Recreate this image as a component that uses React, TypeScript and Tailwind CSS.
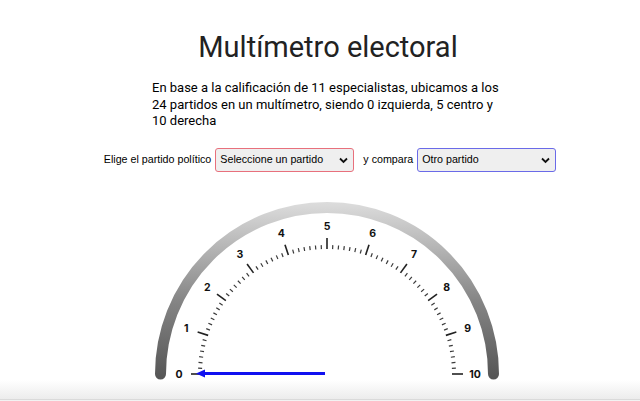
import React from "react";

const CX = 327;
const CY = 373;

function polar(r: number, deg: number) {
  const a = (deg * Math.PI) / 180;
  return { x: CX - r * Math.cos(a), y: CY - r * Math.sin(a) };
}

function Gauge() {
  const majors = Array.from({ length: 11 }, (_, i) => i);
  const minors: number[] = [];
  const sub = 7;
  for (let i = 0; i < 10; i++) {
    for (let j = 1; j < sub; j++) minors.push(i + j / sub);
  }
  return (
    <svg width={640} height={215} viewBox="0 186 640 215" className="block">
      <defs>
        <linearGradient id="arcg" gradientUnits="userSpaceOnUse" x1="0" y1="202" x2="0" y2="380">
          <stop offset="0" stopColor="#dcdcdc" />
          <stop offset="0.25" stopColor="#b5b5b5" />
          <stop offset="0.55" stopColor="#858585" />
          <stop offset="1" stopColor="#545454" />
        </linearGradient>
      </defs>
      <path
        d={`M ${CX - 166.5} ${CY} A 166.5 166.5 0 0 1 ${CX + 166.5} ${CY}`}
        fill="none"
        stroke="url(#arcg)"
        strokeWidth={11}
        strokeLinecap="round"
      />
      {minors.map((v, k) => {
        const deg = v * 18;
        const a = polar(125, deg);
        const b = polar(129, deg);
        return <line key={"m" + k} x1={a.x} y1={a.y} x2={b.x} y2={b.y} stroke="#3a3a3a" strokeWidth={1.2} />;
      })}
      {majors.map((v) => {
        const deg = v * 18;
        const a = polar(125, deg);
        const b = polar(136, deg);
        const t = polar(148, deg);
        return (
          <g key={"M" + v}>
            <line x1={a.x} y1={a.y} x2={b.x} y2={b.y} stroke="#222" strokeWidth={1.6} />
            <text
              x={t.x}
              y={t.y}
              textAnchor="middle"
              dominantBaseline="central"
              fontFamily="Inter, 'DejaVu Sans', sans-serif"
              fontWeight={700}
              fontSize={10.5}
              fill="#111"
            >
              {v}
            </text>
          </g>
        );
      })}
      <line x1={325} y1={372.5} x2={202} y2={372.5} stroke="#1010f0" strokeWidth={3} />
      <polygon points="196,372.5 205,368.5 205,376.5" fill="#1010f0" />
    </svg>
  );
}

function Select({ label, border }: { label: string; border: string }) {
  return (
    <div
      className={`relative w-[139px] h-[24px] rounded-[3px] border-[1.5px] bg-[#efefef] flex items-center pl-[4px] ${border}`}
    >
      <span className="text-[10.7px] text-black" style={{ fontFamily: "'Liberation Sans', Arial, sans-serif" }}>
        {label}
      </span>
      <svg className="absolute right-[5px] top-[8px]" width="9" height="7" viewBox="0 0 9 7">
        <path d="M1 1.5 L4.5 5 L8 1.5" fill="none" stroke="#111" strokeWidth="1.8" />
      </svg>
    </div>
  );
}

export default function App() {
  return (
    <div className="relative w-[640px] h-[401px] overflow-hidden bg-white">
      <div className="pl-[16px] flex flex-col items-center">
        <h1
          className="mt-[29px] text-[29px] leading-[36px] text-[#222] font-normal"
          style={{ fontFamily: "Roboto, 'Noto Sans', sans-serif" }}
        >
          Multímetro electoral
        </h1>
        <p
          className="mt-[15px] w-[352px] text-[13px] leading-[16.5px] text-black"
          style={{ fontFamily: "Roboto, 'Noto Sans', sans-serif" }}
        >
          En base a la calificación de 11 especialistas, ubicamos a los 24 partidos en un multímetro, siendo 0 izquierda, 5 centro y 10 derecha
        </p>
        <div
          className="mt-[18px] ml-[4px] flex items-center text-[10.7px] text-black"
          style={{ fontFamily: "'Liberation Sans', Arial, sans-serif" }}
        >
          <span className="mr-[4px]">Elige el partido político</span>
          <Select label="Seleccione un partido" border="border-[#e8707c]" />
          <span className="ml-[9px] mr-[4px]">y compara</span>
          <Select label="Otro partido" border="border-[#6a6ae8]" />
        </div>
      </div>
      <div className="mt-[15px]">
        <Gauge />
      </div>
      <div className="absolute left-0 bottom-0 w-full">
        <div className="h-[19px] bg-gradient-to-b from-white/0 to-[#ececec]" />
        <div className="h-[1px] bg-[#dadada]" />
        <div className="h-[1px] bg-[#f2f2f2]" />
      </div>
    </div>
  );
}
